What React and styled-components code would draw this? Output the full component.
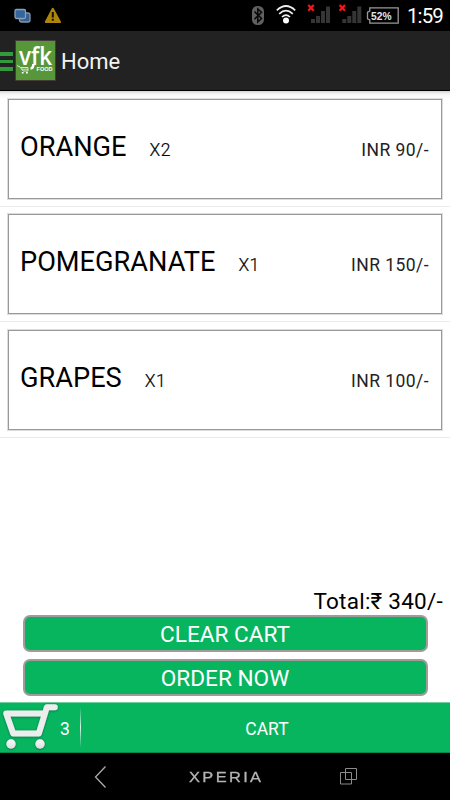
import React from "react";
import styled, { createGlobalStyle } from "styled-components";

const GlobalStyle = createGlobalStyle`
  * {
    box-sizing: border-box;
  }
  body {
    margin: 0;
    background: #fff;
    font-family: Roboto, "Liberation Sans", sans-serif;
  }
  svg {
    display: block;
    flex-shrink: 0;
  }
`;

const Screen = styled.div`
  width: 450px;
  height: 800px;
  display: flex;
  flex-direction: column;
  overflow: hidden;
  background: #fff;
`;

const StatusBar = styled.div`
  height: 31px;
  flex-shrink: 0;
  display: flex;
  align-items: center;
  justify-content: space-between;
  background: #000;
`;

const Clock = styled.span`
  width: 43px;
  color: #fff;
  font-size: 20.5px;
  line-height: 31px;
  letter-spacing: -0.9px;
  padding-top: 2px;
`;

const StatusRight = styled.div`
  display: flex;
  align-items: center;
`;

const Header = styled.header`
  height: 60px;
  flex-shrink: 0;
  display: flex;
  align-items: center;
  background: #222;
  border-bottom: 1px solid #000;

  h1 {
    margin: 0 0 0 5px;
    padding-top: 3px;
    color: #f3f3f3;
    font-size: 22px;
    font-weight: 400;
    line-height: 30px;
  }
`;

const Drawer = styled.div`
  width: 13px;
  margin-right: 2px;
  display: flex;
  flex-direction: column;
  gap: 4px;
  padding-top: 2px;

  span {
    height: 3.5px;
    background: #329a3c;
  }
`;

const List = styled.main`
  flex: 1;
  background: linear-gradient(#d4d4d4, #f4f4f4 3px, #fff 8px);
`;

const Row = styled.div`
  height: ${(props) => props.$height}px;
  padding: 7.5px 8px 0;
  border-bottom: 1px solid #ececec;
`;

const Card = styled.div`
  height: 100px;
  display: flex;
  align-items: baseline;
  padding: 31px 12px 0 11px;
  background: #fff;
  border: 1px solid #999;
  outline: 0.5px solid #ddd;

  .name {
    font-size: 27.2px;
    line-height: 33px;
  }
  .qty {
    margin-left: 23px;
    font-size: 17.5px;
    font-weight: 300;
    letter-spacing: 0.5px;
    color: #000;
    -webkit-text-stroke: 0.2px #000;
  }
  .price {
    margin-left: auto;
    font-size: 17.5px;
    letter-spacing: 0.45px;
    color: #222;
  }
`;

const Total = styled.div`
  height: 30px;
  padding: 1px 7px 0 0;
  text-align: right;
  font-size: 22.5px;
  line-height: 30px;
  letter-spacing: 0.25px;
`;

const Actions = styled.div`
  display: flex;
  flex-direction: column;
  gap: 7px;
  padding: 0 22.5px 6px;
  flex-shrink: 0;
`;

const Button = styled.button`
  height: 37px;
  padding: 2px 0 0;
  border: 2px solid #a09c9e;
  border-radius: 7px;
  background: #07b55f;
  color: #fff;
  font-family: inherit;
  font-size: 22.6px;
  line-height: 31px;
`;

const CartBar = styled.footer`
  height: 51px;
  flex-shrink: 0;
  display: flex;
  align-items: center;
  background: #07b55f;
  border-top: 1px solid #6fcf9e;
  border-bottom: 1px solid #078a48;
  color: #fff;
  font-size: 17.5px;

  .count {
    width: 20px;
    padding-top: 2px;
  }
  .label {
    flex: 1;
    padding: 2px 0 0 3px;
    text-align: center;
  }
`;

const Separator = styled.i`
  width: 1px;
  height: 41px;
  background: linear-gradient(#07b55f, #d8f5e6 50%, #07b55f);
`;

const NavBar = styled.nav`
  height: 47px;
  flex-shrink: 0;
  display: grid;
  grid-template-columns: 94px 95px 150px 111px;
  align-items: center;
  background: #000;

  .brand {
    color: #b4b4b4;
    font-family: "Liberation Sans", sans-serif;
    font-size: 15.2px;
    letter-spacing: 2.2px;
    -webkit-text-stroke: 0.3px #b4b4b4;
    transform: scaleX(1.08);
    transform-origin: left;
  }
`;

function Notifications() {
  return (
    <svg width="70" height="31">
      <rect x="19.5" y="13" width="10.5" height="9" rx="2" fill="#345f91" stroke="#8795a5" strokeWidth="1.3" />
      <rect x="15" y="9.5" width="10.5" height="9" rx="1.5" fill="#34659c" stroke="#8ca0b5" strokeWidth="1.3" />
      <path d="M52.8 8.8 60 22H45.8Z" fill="#ad8609" stroke="#ad8609" strokeWidth="2" strokeLinejoin="round" />
      <path d="M52.8 12V17.5M52.8 18.8V20.8" stroke="#111" strokeWidth="2" />
    </svg>
  );
}

function Signal({ x }) {
  return (
    <g transform={`translate(${x} 0)`}>
      <path d="M3.5 19h4v4h-4zM8.5 16h4v7h-4zM13.5 11h4v12h-4zM18.5 6.5h4v16.5h-4z" fill="#353535" />
      <path d="m.8 5 5.4 5.8m0-5.8L.8 10.8" stroke="#f01818" strokeWidth="2.3" />
    </g>
  );
}

function StatusIcons() {
  return (
    <svg width="167" height="31">
      {/* bluetooth */}
      <rect x="12" y="6" width="12" height="19" rx="5.5" fill="#606060" />
      <path d="m14.5 11.5 7 7-3.7 3.5V9l3.7 3.2-7 7" fill="none" stroke="#090909" strokeWidth="1.6" />
      {/* wifi */}
      <g fill="none" stroke="#eee" strokeWidth="1.7">
        <path d="M36.8 10.3q9.2-8.6 18.4 0M39.2 13.8q6.8-6.2 13.6 0M42 17q4-3.8 8 0" />
      </g>
      <circle cx="46" cy="20.5" r="3" fill="#fff" />
      <Signal x={67.5} />
      <Signal x={98.8} />
      {/* battery */}
      <path d="M129.8 7.8H158.2V23.2H129.8V20L127.5 18.8V12.2L129.8 11Z" fill="none" stroke="#999" strokeWidth="1.3" />
      <text x="131" y="19.5" textLength="20.5" lengthAdjust="spacingAndGlyphs" fill="#e5e5e5" fontFamily="Liberation Sans" fontWeight="700" fontSize="10.8">
        52%
      </text>
    </svg>
  );
}

function Logo() {
  return (
    <svg width="41" height="41" style={{ overflow: "visible" }}>
      <rect x=".5" y=".5" width="40" height="40" fill="#58963a" stroke="#48303f" strokeWidth=".7" />
      <text x="4" y="25.4" textLength="33" lengthAdjust="spacingAndGlyphs" fill="#fff" fontFamily="Open Sans" fontWeight="600" fontSize="25">
        vfk
      </text>
      {/* tail of the f */}
      <path d="M18.4 24Q18.4 28.3 15.5 28.5" fill="none" stroke="#fff" strokeWidth="2.6" />
      <text x="21.5" y="31.2" textLength="16" lengthAdjust="spacingAndGlyphs" fill="#fff" fontFamily="Liberation Sans" fontWeight="700" fontSize="5.3">
        FOOD
      </text>
      <path d="M2 25.5 5 27 8 31H13V27.5H5.5M6.5 29.2H13" fill="none" stroke="#e1ecda" strokeWidth=".9" />
      <path d="M6.8 32h1.8v1.5H6.8zM11 32h1.8v1.5H11z" fill="#fff" />
    </svg>
  );
}

function CartIcon() {
  return (
    <svg width="60" height="49" style={{ overflow: "visible" }}>
      <defs>
        <linearGradient id="metal" x2="0" y2="1">
          <stop stopColor="#fafafa" />
          <stop offset="1" stopColor="#dedede" />
        </linearGradient>
        <filter id="shadow" x="-20%" y="-20%" width="140%" height="140%">
          <feDropShadow dx="0" dy=".5" stdDeviation=".9" floodColor="#034" floodOpacity=".65" />
        </filter>
      </defs>
      <g filter="url(#shadow)">
        <path
          d="M43.5 10.4H6.2L13.2 30.5H38.8L46.8 4.3H54.8"
          fill="none"
          stroke="#ededed"
          strokeWidth="6"
          strokeLinecap="round"
          strokeLinejoin="round"
        />
        <circle cx="11" cy="41" r="4.7" fill="url(#metal)" />
        <circle cx="40" cy="41" r="4.7" fill="url(#metal)" />
      </g>
    </svg>
  );
}

function CartItem({ item }) {
  return (
    <Row $height={item.height}>
      <Card>
        <span className="name">{item.name}</span>
        <span className="qty">X{item.qty}</span>
        <span className="price">INR {item.price}/-</span>
      </Card>
    </Row>
  );
}

const items = [
  { name: "ORANGE", qty: 2, price: 90, height: 115.7 },
  { name: "POMEGRANATE", qty: 1, price: 150, height: 115.7 },
  { name: "GRAPES", qty: 1, price: 100, height: 115.6 },
];

function App() {
  return (
    <>
      <GlobalStyle />
      <Screen>
        <StatusBar>
          <Notifications />
          <StatusRight>
            <StatusIcons />
            <Clock>1:59</Clock>
          </StatusRight>
        </StatusBar>
        <Header>
          <Drawer>
            <span />
            <span />
            <span />
          </Drawer>
          <Logo />
          <h1>Home</h1>
        </Header>
        <List>
          {items.map((item) => (
            <CartItem key={item.name} item={item} />
          ))}
        </List>
        <Total>Total:₹ 340/-</Total>
        <Actions>
          <Button>CLEAR CART</Button>
          <Button>ORDER NOW</Button>
        </Actions>
        <CartBar>
          <CartIcon />
          <span className="count">3</span>
          <Separator />
          <span className="label">CART</span>
        </CartBar>
        <NavBar>
          <span />
          <svg width="14" height="24">
            <path d="M11.5 1.5 1.5 12 11.5 22.5" fill="none" stroke="#aaa" strokeWidth="1.3" />
          </svg>
          <span className="brand">XPERIA</span>
          <svg width="20" height="20">
            <path d="M6.5 1.5H17.5V12.5H6.5ZM1.5 5.5H12.5V17H1.5Z" fill="none" stroke="#8b8b8b" />
          </svg>
        </NavBar>
      </Screen>
    </>
  );
}

export default App;
